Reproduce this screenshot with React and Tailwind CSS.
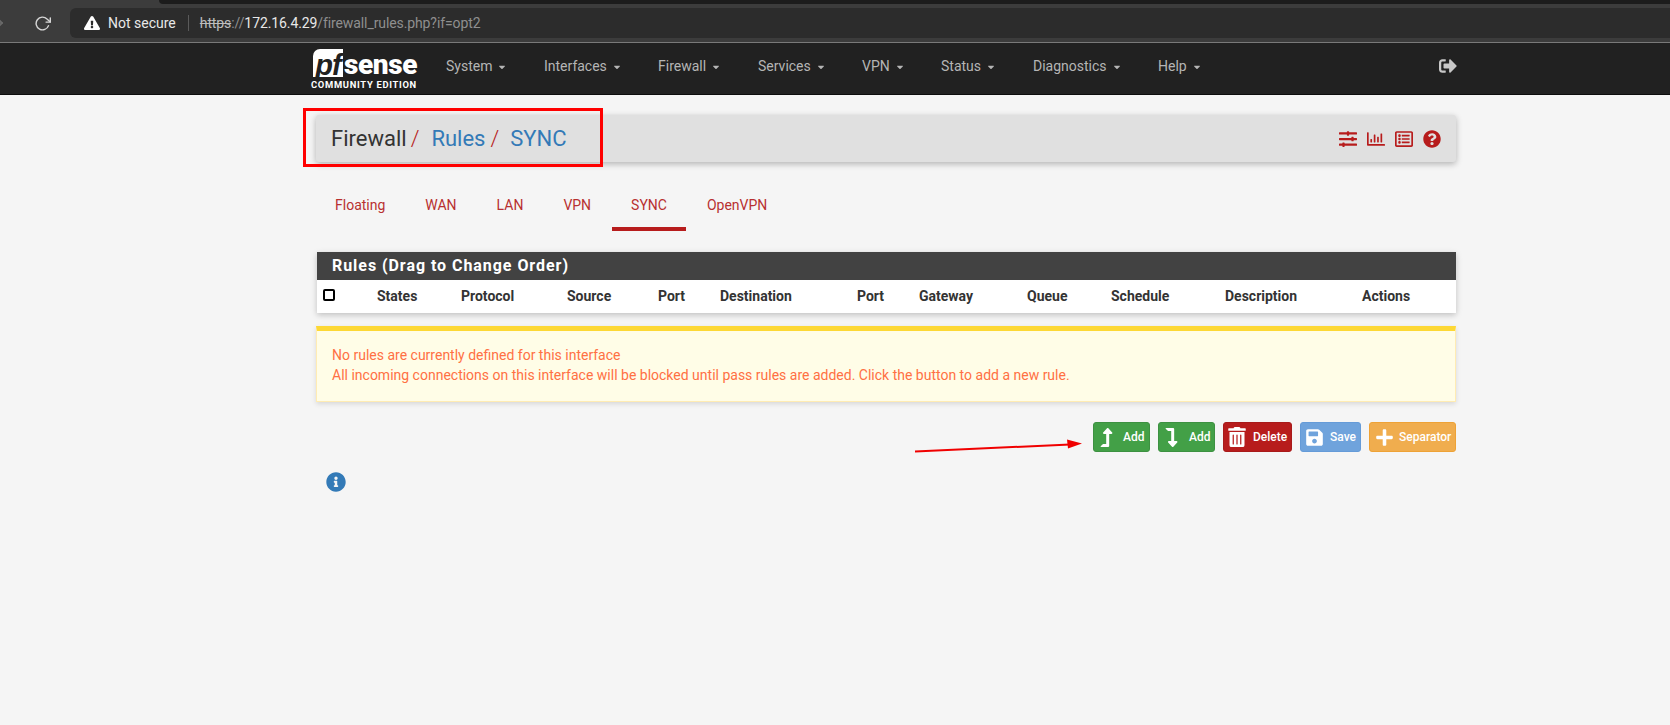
import { FaLevelUpAlt, FaLevelDownAlt, FaTrashAlt, FaSave, FaPlus, FaSignOutAlt, FaSlidersH, FaRegChartBar, FaRegListAlt, FaQuestionCircle, FaInfoCircle, FaCaretDown, FaExclamationTriangle } from 'react-icons/fa'
import { FiRotateCw, FiArrowRight } from 'react-icons/fi'

const navItems = [
  ['System', 'w-[98px]'],
  ['Interfaces', 'w-[114px]'],
  ['Firewall', 'w-[100px]'],
  ['Services', 'w-[104px]'],
  ['VPN', 'w-[79px]'],
  ['Status', 'w-[92px]'],
  ['Diagnostics', 'w-[125px]'],
  ['Help', 'w-[70px]'],
]

const tabs = ['Floating', 'WAN', 'LAN', 'VPN', 'SYNC', 'OpenVPN']

const columns = ['States', 'Protocol', 'Source', 'Port', 'Destination', 'Port', 'Gateway', 'Queue', 'Schedule', 'Description', 'Actions']

const buttons = [
  { label: 'Add', Icon: FaLevelUpAlt, size: 19, color: 'bg-[#43a047] border-[#3d9141]', box: 'w-[57px] pl-[3px] gap-[7px]' },
  { label: 'Add', Icon: FaLevelDownAlt, size: 19, color: 'bg-[#43a047] border-[#3d9141]', box: 'w-[57px] pl-[3px] gap-[8px]' },
  { label: 'Delete', Icon: FaTrashAlt, size: 20, color: 'bg-[#b71c1c] border-[#a81a1a]', box: 'w-[69px] pl-[3px] gap-[6px]' },
  { label: 'Save', Icon: FaSave, size: 19, color: 'bg-[#6fa3dc] border-[#659bd8]', box: 'w-[61px] pl-[4px] gap-[6px]' },
  { label: 'Separator', Icon: FaPlus, size: 19, color: 'bg-[#f0ad4e] border-[#eea236]', box: 'w-[87px] pl-[5px] gap-[5px]' },
]

function BrowserBar() {
  return (
    <div className="h-[43px] bg-[#3c3c3c] border-b border-[#7a7a7a] flex flex-col">
      <div className="h-[4px] flex shrink-0">
        <div className="w-[159px]" />
        <div className="flex-1 bg-[#1c1c1c] rounded-bl-md" />
      </div>
      <div className="flex-1 flex items-center">
        <FiArrowRight className="text-[#6a6a6a] ml-[-12px] shrink-0" size={18} />
        <FiRotateCw className="text-[#d6d6d6] ml-[28px] shrink-0" size={17} />
        <div className="ml-[19px] flex-1 h-[30px] bg-[#2c2c2c] rounded-l-md flex items-center pl-[14px]">
          <FaExclamationTriangle className="text-white shrink-0" size={16} />
          <span className="ml-[8px] text-[14px] text-[#e8e8e8]">Not secure</span>
          <span className="ml-[12px] w-px h-[16px] bg-[#5a5a5a]" />
          <span className="ml-[11px] text-[14px] tracking-[-0.1px] text-[#8f8f8f]">
            <span className="line-through text-[#bdbdbd]">https</span>://<span className="text-[#e8e8e8]">172.16.4.29</span>/firewall_rules.php?if=opt2
          </span>
        </div>
      </div>
    </div>
  )
}

function Logo() {
  return (
    <div className="w-[120px] shrink-0 flex flex-col items-start text-white pt-[6px] pl-[2px]">
      <div className="flex items-center h-[28px] leading-none">
        <span className="bg-white text-[#212121] h-[28px] w-[30px] rounded-tl-[7px] text-[29px] font-bold italic font-['Liberation_Sans',sans-serif] flex items-center justify-center pt-[5px] tracking-[-1px]">pf</span>
        <span className="text-[28px] font-black tracking-[-0.4px] pl-px pt-[3px]">sense</span>
      </div>
      <div className="mt-[2px] ml-[-2px] text-[9.4px] leading-[11px] font-bold tracking-[0.7px] whitespace-nowrap">COMMUNITY EDITION</div>
    </div>
  )
}

function NavBar() {
  return (
    <div className="h-[52px] bg-[#212121] border-b border-[#0d0d0d] flex items-stretch pl-[311px]">
      <Logo />
      <div className="flex items-center ml-[-4px] pl-[19px] pb-[4px]">
        {navItems.map(([label, width]) => (
          <div key={label} className={`${width} flex items-center text-[14px] text-[#b5b5b5]`}>
            {label}
            <FaCaretDown className="ml-[5px] text-[#b5b5b5]" size={10} />
          </div>
        ))}
      </div>
      <div className="flex-1" />
      <div className="flex items-center pr-[213px] pb-[6px]">
        <FaSignOutAlt className="text-[#c8c8c8]" size={18} />
      </div>
    </div>
  )
}

function Breadcrumb() {
  return (
    <div className="h-[47px] bg-[#e0e0e0] rounded-[3px] shadow-[0_2px_6px_rgba(0,0,0,0.28)] flex items-center justify-between pl-[15px] pr-[15px]">
      <div className="text-[22px] text-[#333] flex items-center">
        Firewall
        <span className="text-[#b71c1c] ml-[4px] font-light">/</span>
        <span className="text-[#337ab7] ml-[12px]">Rules</span>
        <span className="text-[#b71c1c] ml-[5px] font-light">/</span>
        <span className="text-[#337ab7] ml-[11px]">SYNC</span>
      </div>
      <div className="flex items-center gap-[10px] text-[#b71c1c] pt-[1px]">
        <FaSlidersH size={18} />
        <FaRegChartBar size={18} />
        <FaRegListAlt size={18} />
        <FaQuestionCircle size={18} />
      </div>
    </div>
  )
}

function Tabs() {
  return (
    <div className="flex h-[64px] mt-[26px] ml-[-1px] text-[14px] text-[#b83030]">
      {tabs.map(tab => (
        <div
          key={tab}
          className={`pt-[4px] leading-[26px] ${tab === 'SYNC' ? 'border-b-[4px] border-[#b71c1c] h-[43px] px-[19px] mx-px' : 'px-[20px]'}`}
        >
          {tab}
        </div>
      ))}
    </div>
  )
}

function RulesTable() {
  return (
    <div className="ml-px shadow-[0_2px_6px_rgba(0,0,0,0.22)]">
      <div className="h-[28px] bg-[#424242] text-white text-[16px] font-bold tracking-[0.95px] leading-[27px] pl-[15px]">
        Rules (Drag to Change Order)
      </div>
      <div className="h-[33px] bg-white grid grid-cols-[60px_84px_106px_91px_62px_137px_62px_108px_84px_114px_137px_1fr] items-center text-[14px] font-bold text-[#333]">
        <div className="pl-[6px]">
          <div className="w-[12px] h-[12px] rounded-[2px] border-2 border-black mb-[4px]" />
        </div>
        {columns.map((col, i) => (
          <div key={i}>{col}</div>
        ))}
      </div>
    </div>
  )
}

function Notice() {
  return (
    <div className="mt-[13px] h-[76px] bg-[#fffde7] border border-[#ffecb3] border-t-[5px] border-t-[#fdd835] shadow-[0_2px_5px_rgba(0,0,0,0.12)] pl-[15px] pt-[14px] text-[14px] leading-[20px] text-[#ff7043]">
      <div>No rules are currently defined for this interface</div>
      <div>All incoming connections on this interface will be blocked until pass rules are added. Click the button to add a new rule.</div>
    </div>
  )
}

function ActionButtons() {
  return (
    <div className="mt-[20px] flex justify-end gap-[8px]">
      {buttons.map(({ label, Icon, size, color, box }, i) => (
        <button
          key={i}
          className={`${color} ${box} h-[30px] border rounded-[3px] flex items-center text-white text-[12px] font-medium whitespace-nowrap`}
        >
          <Icon className="shrink-0" size={size} />
          <span>{label}</span>
        </button>
      ))}
    </div>
  )
}

export default function App() {
  return (
    <div className="w-[1670px] h-[725px] overflow-hidden bg-[#f5f5f5] relative font-['Roboto',sans-serif]">
      <BrowserBar />
      <NavBar />
      <main className="ml-[316px] w-[1140px] pt-[20px]">
        <Breadcrumb />
        <Tabs />
        <RulesTable />
        <Notice />
        <ActionButtons />
        <FaInfoCircle className="text-[#337ab7] ml-[10px] mt-[20px]" size={20} />
      </main>

      {/* annotations drawn on top of the screenshot */}
      <div className="absolute left-[303px] top-[108px] w-[300px] h-[59px] border-[3px] border-[#ff0000]" />
      <svg className="absolute left-[910px] top-[435px]" width="180" height="24" viewBox="0 0 180 24">
        <path d="M5 16.5 L160 9.5" stroke="#f00000" strokeWidth="2" fill="none" />
        <path d="M172 8.5 L157 4.5 L158 13.5 Z" fill="#f00000" />
      </svg>
    </div>
  )
}
